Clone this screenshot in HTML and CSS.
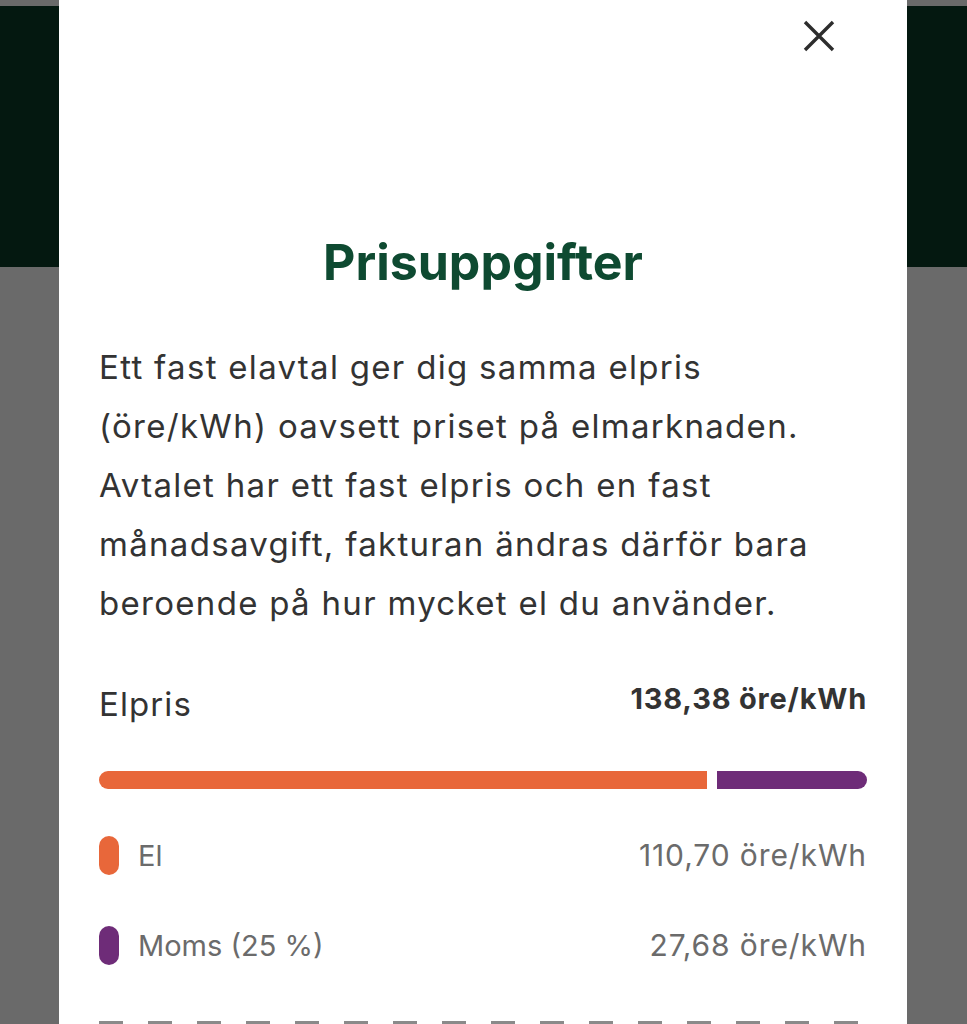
FILE: index.html
```html
<!DOCTYPE html>
<html lang="sv">
<head>
	<meta charset="UTF-8">
	<title>Prisuppgifter</title>
	<link rel="stylesheet" href="styles.css">
</head>
<body>
	<div class="page">
		<div class="topbar"></div>
		<div class="hero"></div>
	</div>
	<div class="modal">
		<div class="modal-head">
			<a href="javascript:;" class="close" aria-label="Stäng">
				<svg width="32" height="32" viewBox="0 0 32 32"><path d="M2 2L30 30M30 2L2 30" stroke="#2d2d2d" stroke-width="3.4" fill="none"/></svg>
			</a>
		</div>
		<h1 class="title">Prisuppgifter</h1>
		<p class="intro">Ett fast elavtal ger dig samma elpris<br>(öre/kWh) oavsett priset på elmarknaden.<br>Avtalet har ett fast elpris och en fast<br>månadsavgift, fakturan ändras därför bara<br>beroende på hur mycket el du använder.</p>
		<div class="total">
			<span class="total-label">Elpris</span>
			<span class="total-value">138,38 öre/kWh</span>
		</div>
		<div class="bar">
			<span class="bar-el" style="width: 79.2%;"></span>
			<span class="bar-moms"></span>
		</div>
		<ul class="legend">
			<li><span class="dot dot-el"></span><span class="legend-name">El</span><span class="legend-value">110,70 öre/kWh</span></li>
			<li><span class="dot dot-moms"></span><span class="legend-name">Moms (25 %)</span><span class="legend-value">27,68 öre/kWh</span></li>
		</ul>
		<div class="dashes"></div>
	</div>
</body>
</html>
```
FILE: styles.css
```css
*{margin: 0;padding: 0;box-sizing: border-box;}
html,body{height: 100%;overflow: hidden;}
body{background: #6a6a6a;font-family: Inter, "Noto Sans", sans-serif;color: #333;}
.topbar{height: 6px;background: #6a6a6a;}
.hero{height: 261px;background: #041810;}

.modal{position: absolute;left: 59px;top: 0;width: 848px;height: 1100px;background: #fff;padding: 0 40px;}
.modal-head{display: flex;justify-content: flex-end;padding-top: 12px;padding-right: 24px;}
.close{display: flex;align-items: center;justify-content: center;width: 48px;height: 48px;}

.title{margin-top: 172px;text-align: center;font-size: 50px;font-weight: 700;color: #0e4a31;line-height: 60px;}
.intro{margin-top: 46px;font-size: 33px;letter-spacing: 1.3px;line-height: 59px;color: #333;white-space: nowrap;}

.total{display: flex;justify-content: space-between;align-items: flex-start;margin-top: 51px;}
.total-label{font-size: 33px;line-height: 40px;letter-spacing: 1.1px;}
.total-value{font-size: 29px;line-height: 29px;font-weight: 700;letter-spacing: 0.8px;}

.bar{display: flex;gap: 10px;height: 18px;margin-top: 47px;}
.bar span{display: block;height: 100%;}
.bar-el{background: #e8673a;border-radius: 9px 0 0 9px;}
.bar-moms{flex: 1;background: #6e2c78;border-radius: 0 9px 9px 0;}

.legend{list-style: none;margin-top: 46px;}
.legend li{display: flex;align-items: center;height: 40px;margin-bottom: 50px;font-size: 29px;color: #6b6b6b;}
.dot{width: 20px;height: 39px;border-radius: 10px;margin-right: 19px;}
.dot-el{background: #e8673a;}
.dot-moms{background: #6e2c78;}
.legend-value{margin-left: auto;font-size: 30px;letter-spacing: 0.9px;}

.dashes{height: 3px;background: repeating-linear-gradient(90deg, #8a8a8a 0 24px, transparent 24px 49px);margin-top: 56px;}
```
